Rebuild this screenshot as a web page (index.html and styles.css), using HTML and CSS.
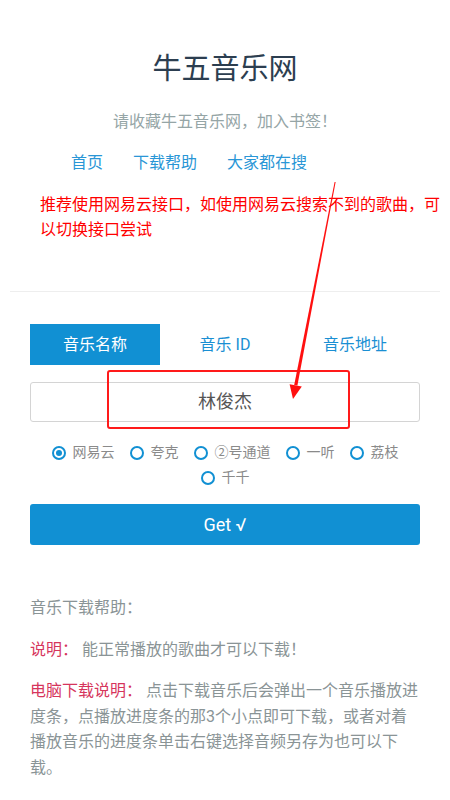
FILE: index.html
```html
<!DOCTYPE html>
<html lang="zh-CN">
<head>
<meta charset="utf-8">
<title>牛五音乐网</title>
<link rel="stylesheet" href="styles.css">
</head>
<body>
<div class="wrap">
  <header class="header">
    <h1 class="title">牛五音乐网</h1>
    <p class="subtitle">请收藏牛五音乐网，加入书签！</p>
  </header>
  <nav class="nav">
    <a class="nav-link" href="#">首页</a>
    <a class="nav-link" href="#">下载帮助</a>
    <a class="nav-link" href="#">大家都在搜</a>
  </nav>
  <p class="notice">推荐使用网易云接口，如使用网易云搜索不到的歌曲，可以切换接口尝试</p>
  <hr class="rule">
  <div class="form">
    <div class="tabs">
      <div class="tab active">音乐名称</div>
      <div class="tab">音乐 ID</div>
      <div class="tab">音乐地址</div>
    </div>
    <div class="input">林俊杰</div>
    <div class="radios">
      <label class="radio"><span class="dot checked"></span>网易云</label>
      <label class="radio"><span class="dot"></span>夸克</label>
      <label class="radio"><span class="dot"></span>②号通道</label>
      <label class="radio"><span class="dot"></span>一听</label>
      <label class="radio"><span class="dot"></span>荔枝</label>
      <label class="radio"><span class="dot"></span>千千</label>
    </div>
    <div class="btn">Get √</div>
    <div class="help">
      <p class="help-p">音乐下载帮助：</p>
      <p class="help-p"><span class="hl">说明：</span> 能正常播放的歌曲才可以下载！</p>
      <p class="help-p"><span class="hl">电脑下载说明：</span> 点击下载音乐后会弹出一个音乐播放进度条，点播放进度条的那3个小点即可下载，或者对着播放音乐的进度条单击右键选择音频另存为也可以下载。</p>
    </div>
  </div>
</div>
<div class="mark-box"></div>
<svg class="arrow" width="450" height="800" viewBox="0 0 450 800">
  <polygon points="334.6,182 335.6,182 297.4,385.6 294.2,385" fill="#ff1010"/>
  <polygon points="293,399 289.6,384.2 301.8,386.6" fill="#ff1010"/>
</svg>
</body>
</html>
```
FILE: styles.css
```css
html, body {
  margin: 0;
  padding: 0;
  background: #fff;
}
body {
  font-family: Roboto, "Noto Sans CJK SC", sans-serif;
  font-size: 16px;
  position: relative;
  width: 450px;
}
.wrap {
  padding: 0 10px;
}
.header {
  text-align: center;
}
.title {
  margin: 0;
  padding-top: 49px;
  font-size: 29px;
  line-height: 40px;
  font-weight: 400;
  color: #2c3e50;
}
.subtitle {
  margin: 21px 0 0;
  font-size: 16px;
  line-height: 24px;
  color: #95a5a6;
}
.nav {
  display: flex;
  gap: 30px;
  margin: 17px 0 0 61px;
  line-height: 24px;
}
.nav-link {
  color: #2a96d6;
  text-decoration: none;
  font-size: 16px;
}
.notice {
  margin: 17px 0 0;
  padding-left: 30px;
  color: #ff0000;
  font-size: 16px;
  line-height: 25px;
}
.rule {
  margin: 49px 0 0;
  border: 0;
  border-top: 1px solid #eeeeee;
  height: 0;
}
.form {
  padding: 0 20px;
}
.tabs {
  display: flex;
  margin-top: 32px;
}
.tab {
  flex: 1;
  height: 41px;
  line-height: 41px;
  text-align: center;
  color: #1a8fd3;
  font-size: 16px;
}
.tab.active {
  background: #1190d3;
  color: #fff;
}
.input {
  margin-top: 17px;
  height: 38px;
  line-height: 38px;
  border: 1px solid #d4d4d4;
  border-radius: 3px;
  text-align: center;
  font-size: 18px;
  color: #555;
}
.radios {
  display: flex;
  flex-wrap: wrap;
  justify-content: center;
  column-gap: 15px;
  margin-top: 18px;
  line-height: 25px;
}
.radio {
  display: flex;
  align-items: center;
  gap: 7px;
  font-size: 14px;
  color: #8a8a8a;
}
.dot {
  width: 10px;
  height: 10px;
  border: 2px solid #1190d3;
  border-radius: 50%;
  position: relative;
  box-sizing: content-box;
}
.dot.checked::after {
  content: "";
  position: absolute;
  left: 2px;
  top: 2px;
  width: 6px;
  height: 6px;
  border-radius: 50%;
  background: #1190d3;
}
.btn {
  margin-top: 14px;
  height: 41px;
  line-height: 41px;
  background: #1190d3;
  border-radius: 3px;
  color: #fff;
  text-align: center;
  font-size: 18px;
}
.help {
  margin-top: 50px;
}
.help-p {
  margin: 0 0 16px;
  font-size: 16px;
  line-height: 25.6px;
  color: #8a9496;
}
.hl {
  color: #d6355c;
}
.mark-box {
  position: absolute;
  left: 107px;
  top: 370px;
  width: 239px;
  height: 55px;
  border: 2px solid #ff1a1a;
  border-radius: 3px;
}
.arrow {
  position: absolute;
  left: 0;
  top: 0;
  pointer-events: none;
}
```
